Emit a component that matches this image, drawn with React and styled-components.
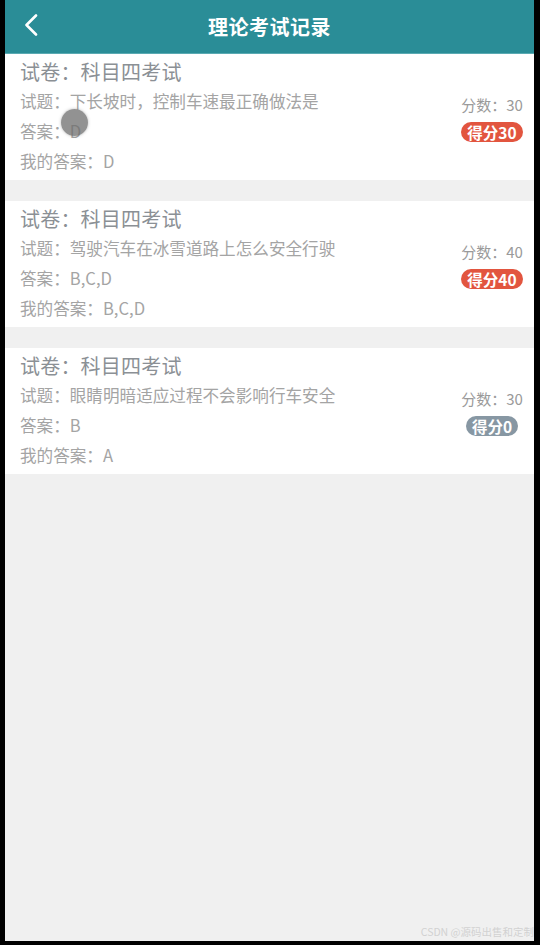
import React from "react";
import styled, { createGlobalStyle } from "styled-components";

const Global = createGlobalStyle`
  html, body { margin: 0; padding: 0; background: #000; }
  body { font-family: "Noto Sans CJK SC", "Noto Sans", sans-serif; }
  * { box-sizing: border-box; }
`;

const Screen = styled.div`
  position: relative;
  margin-left: 5px;
  width: 529px;
  height: 941px;
  background: #f0f0f0;
  display: flex;
  flex-direction: column;
  overflow: hidden;
`;

const Header = styled.div`
  position: relative;
  height: 54px;
  flex: 0 0 54px;
  background: #2a8d97;
  display: flex;
  align-items: center;
  justify-content: center;
  border-bottom: 1px solid #5aaab2;
`;

const Back = styled.div`
  position: absolute;
  left: 15px;
  top: 13px;
  width: 22px;
  height: 24px;
  display: flex;
  align-items: center;
  justify-content: center;
`;

const Title = styled.div`
  color: #fff;
  font-size: 20px;
  font-weight: 700;
  letter-spacing: 0.5px;
`;

const List = styled.div`
  display: flex;
  flex-direction: column;
  gap: 21px;
`;

const Card = styled.div`
  background: #fff;
  padding: 4px 10px 4px 15px;
  display: flex;
  flex-direction: column;
`;

const PaperTitle = styled.div`
  font-size: 20px;
  line-height: 28px;
  color: #8b9095;
  letter-spacing: 0.2px;
`;

const Body = styled.div`
  display: flex;
  align-items: flex-start;
`;

const Rows = styled.div`
  flex: 1;
  display: flex;
  flex-direction: column;
`;

const Row = styled.div`
  font-size: 16.6px;
  line-height: 30px;
  color: #a4a4a4;
  white-space: nowrap;
`;

const Side = styled.div`
  width: 64px;
  margin-top: 4px;
  display: flex;
  flex-direction: column;
  align-items: center;
`;

const Score = styled.div`
  font-size: 15px;
  line-height: 30px;
  color: #9a9a9a;
  white-space: nowrap;
`;

const Badge = styled.div`
  margin-top: 2px;
  height: 20px;
  padding: 0 6px;
  border-radius: 10px;
  background: ${(p) => (p.$zero ? "#8797a3" : "#e2553f")};
  color: #fff;
  font-size: 15.5px;
  font-weight: 700;
  line-height: 20px;
  white-space: nowrap;
`;

const Touch = styled.div`
  position: absolute;
  left: 56px;
  top: 109px;
  width: 27px;
  height: 27px;
  border-radius: 50%;
  background: rgba(110, 110, 110, 0.75);
  box-shadow: 0 0 3px rgba(110, 110, 110, 0.5);
`;

const Watermark = styled.div`
  position: absolute;
  right: 0;
  bottom: 2px;
  font-size: 10.5px;
  color: #d2d2d2;
  white-space: nowrap;
`;

const records = [
  { q: "下长坡时，控制车速最正确做法是", a: "D", my: "D", score: 30, got: 30 },
  { q: "驾驶汽车在冰雪道路上怎么安全行驶", a: "B,C,D", my: "B,C,D", score: 40, got: 40 },
  { q: "眼睛明暗适应过程不会影响行车安全", a: "B", my: "A", score: 30, got: 0 },
];

export default function App() {
  return (
    <>
      <Global />
      <Screen>
        <Header>
          <Back>
            <svg width="14" height="22" viewBox="0 0 14 22">
              <path d="M12 1.5 L2.5 11 L12 20.5" fill="none" stroke="#fff" strokeWidth="2.6" strokeLinecap="round" strokeLinejoin="round" />
            </svg>
          </Back>
          <Title>理论考试记录</Title>
        </Header>
        <List>
          {records.map((r, i) => (
            <Card key={i}>
              <PaperTitle>试卷：科目四考试</PaperTitle>
              <Body>
                <Rows>
                  <Row>试题：{r.q}</Row>
                  <Row>答案：{r.a}</Row>
                  <Row>我的答案：{r.my}</Row>
                </Rows>
                <Side>
                  <Score>分数：{r.score}</Score>
                  <Badge $zero={r.got === 0}>得分{r.got}</Badge>
                </Side>
              </Body>
            </Card>
          ))}
        </List>
        <Touch />
        <Watermark>CSDN @源码出售和定制</Watermark>
      </Screen>
    </>
  );
}
